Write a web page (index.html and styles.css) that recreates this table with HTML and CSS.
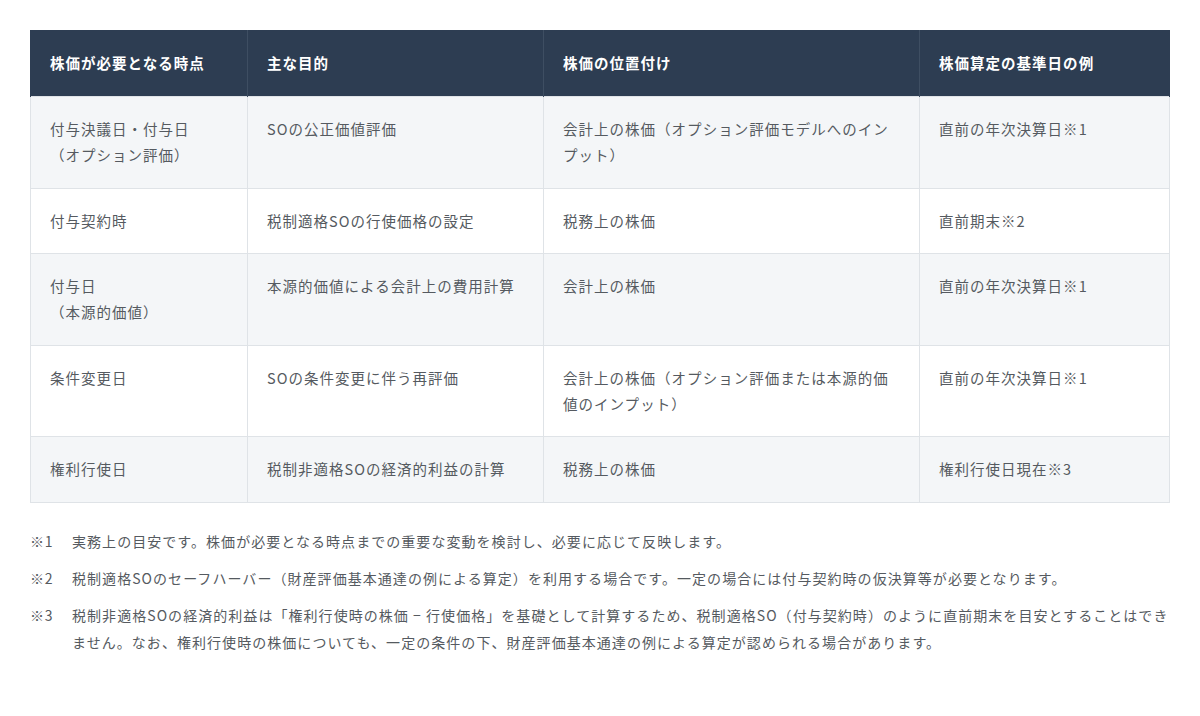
FILE: index.html
```html
<!DOCTYPE html>
<html lang="ja">
<head>
<meta charset="utf-8">
<link rel="stylesheet" href="styles.css">
</head>
<body>
<div class="page">
  <table class="stock-table">
    <colgroup>
      <col class="c1"><col class="c2"><col class="c3"><col class="c4">
    </colgroup>
    <thead>
      <tr>
        <th>株価が必要となる時点</th>
        <th>主な目的</th>
        <th>株価の位置付け</th>
        <th>株価算定の基準日の例</th>
      </tr>
    </thead>
    <tbody>
      <tr>
        <td>付与決議日・付与日<br>（オプション評価）</td>
        <td>SOの公正価値評価</td>
        <td>会計上の株価（オプション評価モデルへのインプット）</td>
        <td>直前の年次決算日※1</td>
      </tr>
      <tr>
        <td>付与契約時</td>
        <td>税制適格SOの行使価格の設定</td>
        <td>税務上の株価</td>
        <td>直前期末※2</td>
      </tr>
      <tr>
        <td>付与日<br>（本源的価値）</td>
        <td>本源的価値による会計上の費用計算</td>
        <td>会計上の株価</td>
        <td>直前の年次決算日※1</td>
      </tr>
      <tr>
        <td>条件変更日</td>
        <td>SOの条件変更に伴う再評価</td>
        <td>会計上の株価（オプション評価または本源的価値のインプット）</td>
        <td>直前の年次決算日※1</td>
      </tr>
      <tr>
        <td>権利行使日</td>
        <td>税制非適格SOの経済的利益の計算</td>
        <td>税務上の株価</td>
        <td>権利行使日現在※3</td>
      </tr>
    </tbody>
  </table>

  <div class="notes">
    <div class="note"><span class="mark">※1</span><p>実務上の目安です。株価が必要となる時点までの重要な変動を検討し、必要に応じて反映します。</p></div>
    <div class="note"><span class="mark">※2</span><p>税制適格SOのセーフハーバー（財産評価基本通達の例による算定）を利用する場合です。一定の場合には付与契約時の仮決算等が必要となります。</p></div>
    <div class="note"><span class="mark">※3</span><p>税制非適格SOの経済的利益は「権利行使時の株価 − 行使価格」を基礎として計算するため、税制適格SO（付与契約時）のように直前期末を目安とすることはできません。なお、権利行使時の株価についても、一定の条件の下、財産評価基本通達の例による算定が認められる場合があります。</p></div>
  </div>
</div>
</body>
</html>
```

FILE: styles.css
```css
html, body {
  margin: 0;
  padding: 0;
  background: #ffffff;
}
body {
  font-family: "Noto Sans CJK JP", "Noto Sans", sans-serif;
  color: #555a60;
}
.page {
  padding: 30px 30px 0 30px;
}
.stock-table {
  width: 1139px;
  border-collapse: collapse;
  table-layout: fixed;
  font-size: 14.5px;
  letter-spacing: 0.07em;
  line-height: 26px;
}
.c1 { width: 217px; }
.c2 { width: 296px; }
.c3 { width: 376px; }
.c4 { width: 250px; }
.stock-table th {
  background: #2d3d52;
  color: #ffffff;
  font-weight: 700;
  text-align: left;
  padding: 20px 18px 20px 19px;
  border-left: 1px solid #3e4e62;
  border-right: 1px solid #3e4e62;
}
.stock-table th:first-child { border-left-color: #2d3d52; }
.stock-table th:last-child { border-right-color: #2d3d52; }
.stock-table td {
  vertical-align: top;
  padding: 19px 18px 19.6px 19px;
  border: 1px solid #dfe3e7;
  font-weight: 400;
}
.stock-table tbody tr:nth-child(odd) td {
  background: #f4f6f8;
}
.stock-table tbody tr:nth-child(even) td {
  background: #ffffff;
}
.notes {
  margin-top: 25px;
  display: flex;
  flex-direction: column;
  gap: 10px;
  font-size: 14px;
  letter-spacing: 0.075em;
  line-height: 27px;
}
.note {
  display: flex;
}
.mark {
  flex: 0 0 42px;
  letter-spacing: 0.05em;
}
.note p {
  margin: 0;
  flex: 1;
}
```
